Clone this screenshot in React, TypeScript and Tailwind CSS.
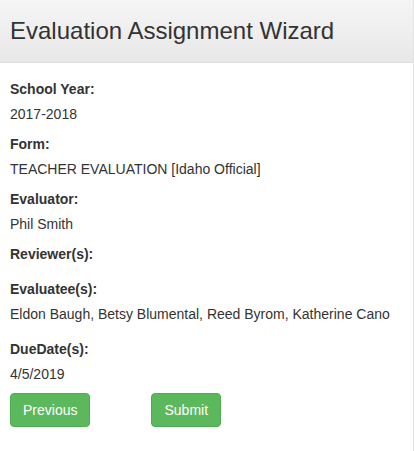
const fields: { label: string; value?: string; gap?: string }[] = [
  { label: 'School Year:', value: '2017-2018' },
  { label: 'Form:', value: 'TEACHER EVALUATION [Idaho Official]' },
  { label: 'Evaluator:', value: 'Phil Smith' },
  { label: 'Reviewer(s):' },
  { label: 'Evaluatee(s):', value: 'Eldon Baugh, Betsy Blumental, Reed Byrom, Katherine Cano', gap: 'mb-[15px]' },
  { label: 'DueDate(s):', value: '4/5/2019', gap: 'mb-[9px]' },
]

export default function App() {
  return (
    <div className="w-[414px] h-[451px] bg-white text-[#333] font-['Liberation_Sans',Arial,sans-serif] text-[14px] leading-[20px] border-r border-[#e3e3e3]">
      {/* Wizard heading */}
      <div className="h-[63px] flex items-center px-[10px] bg-gradient-to-b from-[#f5f5f5] to-[#e8e8e8] border-b border-[#ddd]">
        <h3 className="text-[24px] leading-[1.1] text-[#333]">Evaluation Assignment Wizard</h3>
      </div>

      <div className="px-[10px] pt-[16px]">
        {fields.map((f) => (
          <div key={f.label} className="flex flex-col">
            <div className="font-bold mb-[5px]">{f.label}</div>
            {f.value ? (
              <div className={f.gap ?? 'mb-[10px]'}>{f.value}</div>
            ) : (
              <div className="mb-[10px]" />
            )}
          </div>
        ))}

        <div className="flex gap-[61px]">
          <button className="px-[12px] py-[6px] bg-[#5cb85c] border border-[#4cae4c] rounded-[4px] text-white leading-[20px]">
            Previous
          </button>
          <button className="px-[12px] py-[6px] bg-[#5cb85c] border border-[#4cae4c] rounded-[4px] text-white leading-[20px]">
            Submit
          </button>
        </div>
      </div>
    </div>
  )
}
